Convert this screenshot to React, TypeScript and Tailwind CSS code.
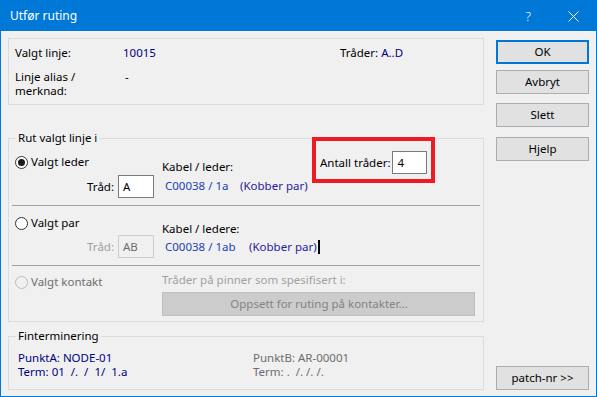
import React from 'react';

function Radio({ checked, disabled }: { checked?: boolean; disabled?: boolean }) {
  return (
    <span
      className={`flex h-[13px] w-[13px] shrink-0 items-center justify-center rounded-full border ${
        disabled ? 'border-[#bcbcbc] bg-[#f0f0f0]' : 'border-[#333333] bg-white'
      }`}
    >
      {checked && <span className="h-[7px] w-[7px] rounded-full bg-[#1a1a1a]" />}
    </span>
  );
}

function Btn({ label, primary, className = '' }: { label: string; primary?: boolean; className?: string }) {
  return (
    <button
      className={`flex h-[24px] w-[93px] items-center justify-center whitespace-nowrap bg-[#e1e1e1] text-black ${
        primary ? 'border-2 border-[#0078d7]' : 'border border-[#adadad]'
      } ${className}`}
    >
      {label}
    </button>
  );
}

export default function App() {
  return (
    <div className="flex h-[397px] w-[597px] flex-col whitespace-nowrap border border-[#0078d7] bg-[#f0f0f0] font-['Noto_Sans',sans-serif] text-[11.5px] leading-[14px] text-black">
      {/* title bar */}
      <div className="flex h-[30px] shrink-0 items-center bg-[#0078d7] pl-[9px] text-white">
        <span className="text-[12px]">Utfør ruting</span>
        <span className="ml-auto mr-[37px] text-[13px] font-light">?</span>
        <svg width="11" height="11" viewBox="0 0 11 11" className="mr-[17px]">
          <path d="M0.5 0.5 L10.5 10.5 M10.5 0.5 L0.5 10.5" stroke="white" strokeWidth="1" />
        </svg>
      </div>

      <div className="flex pl-[7px]">
        {/* left column */}
        <div className="w-[476px] pt-[7px]">
          {/* group 1 */}
          <div className="h-[67px] border border-[#dcdcdc] pl-[6px] pt-[7px]">
            <div className="flex">
              <span className="w-[108px]">Valgt linje:</span>
              <span className="w-[217px] text-[#000080]">10015</span>
              <span>
                Tråder: <span className="text-[#000080]">A..D</span>
              </span>
            </div>
            <div className="mt-[10px] flex">
              <span className="w-[110px]">
                Linje alias /<br />merknad:
              </span>
              <span>-</span>
            </div>
          </div>

          {/* group 2 */}
          <fieldset className="mt-[25px] h-[192px] border border-[#dcdcdc]">
            <legend className="ml-[7px] px-[2px] leading-[16px]">Rut valgt linje i</legend>

            {/* valgt leder */}
            <div className="relative flex">
              <div className="w-[153px]">
                <div className="mt-[8px] flex h-[16px] items-center gap-[3px] pl-[6px]">
                  <Radio checked />
                  <span>Valgt leder</span>
                </div>
                <div className="mt-[5px] flex items-center justify-end gap-[4px] pr-[8px]">
                  <span>Tråd:</span>
                  <div className="flex h-[23px] w-[36px] items-center border border-[#7a7a7a] bg-white pl-[4px]">A</div>
                </div>
              </div>
              <div>
                <div className="mt-[14px]">Kabel / leder:</div>
                <div className="mt-[5px] flex pl-[3px]">
                  <span className="w-[75px] text-[#1c3fb5]">C00038 / 1a</span>
                  <span className="text-[#2a1a9a]">(Kobber par)</span>
                </div>
              </div>

              {/* highlighted field */}
              <div className="absolute left-[303px] top-[-9px] flex h-[46px] w-[123px] items-start border-4 border-[#ed1c24] pl-[4px] pt-[10px]">
                <span className="mt-[5px]">Antall tråder:</span>
                <div className="ml-[1px] flex h-[23px] w-[35px] items-center border border-[#7a7a7a] bg-white pl-[5px]">4</div>
              </div>
            </div>

            <div className="mx-[3px] mt-[7px] h-px bg-[#a0a0a0]" />

            {/* valgt par */}
            <div className="flex">
              <div className="w-[153px]">
                <div className="mt-[9px] flex h-[16px] items-center gap-[3px] pl-[6px]">
                  <Radio />
                  <span>Valgt par</span>
                </div>
                <div className="mt-[4px] flex items-center justify-end gap-[4px] pr-[8px]">
                  <span className="text-[#a0a0a0]">Tråd:</span>
                  <div className="flex h-[23px] w-[36px] items-center border border-[#cccccc] bg-[#f0f0f0] pl-[4px] text-[#6d6d6d]">
                    AB
                  </div>
                </div>
              </div>
              <div>
                <div className="mt-[16px]">Kabel / ledere:</div>
                <div className="mt-[4px] flex items-center pl-[3px]">
                  <span className="w-[84px] text-[#1c3fb5]">C00038 / 1ab</span>
                  <span className="text-[#2a1a9a]">(Kobber par)</span>
                  <span className="ml-px h-[14px] w-[2px] bg-black" />
                </div>
              </div>
            </div>

            <div className="mx-[3px] mt-[7px] h-px bg-[#a0a0a0]" />

            {/* valgt kontakt */}
            <div className="flex">
              <div className="w-[153px]">
                <div className="mt-[8px] flex h-[16px] items-center gap-[3px] pl-[6px]">
                  <Radio disabled />
                  <span className="text-[#6d6d6d]">Valgt kontakt</span>
                </div>
              </div>
              <div>
                <div className="mt-[7px] text-[#a0a0a0]">Tråder på pinner som spesifisert i:</div>
                <div className="mt-[5px] flex h-[24px] w-[313px] items-center justify-center border border-[#bfbfbf] bg-[#cccccc] pl-[1px] text-[#838383]">
                  Oppsett for ruting på kontakter...
                </div>
              </div>
            </div>
          </fieldset>

          {/* group 3 */}
          <fieldset className="mt-[6px] h-[62px] border border-[#dcdcdc]">
            <legend className="ml-[7px] px-[2px] leading-[16px]">Finterminering</legend>
            <div className="flex pl-[9px] pt-[7px]">
              <div className="w-[235px] text-[#000080]">
                <div>PunktA: NODE-01</div>
                <div>Term: 01 &nbsp;/. &nbsp;/ &nbsp;1/ &nbsp;1.a</div>
              </div>
              <div className="text-[#6d6d6d]">
                <div>PunktB: AR-00001</div>
                <div>Term: . &nbsp;/. /. /.</div>
              </div>
            </div>
          </fieldset>
        </div>

        {/* right column */}
        <div className="ml-[12px] flex w-[93px] flex-col pt-[9px]">
          <Btn label="OK" primary />
          <Btn label="Avbryt" className="mt-[6px]" />
          <Btn label="Slett" className="mt-[9px]" />
          <Btn label="Hjelp" className="mt-[10px]" />
          <Btn label="patch-nr >>" className="mt-[205px]" />
        </div>
      </div>
    </div>
  );
}
